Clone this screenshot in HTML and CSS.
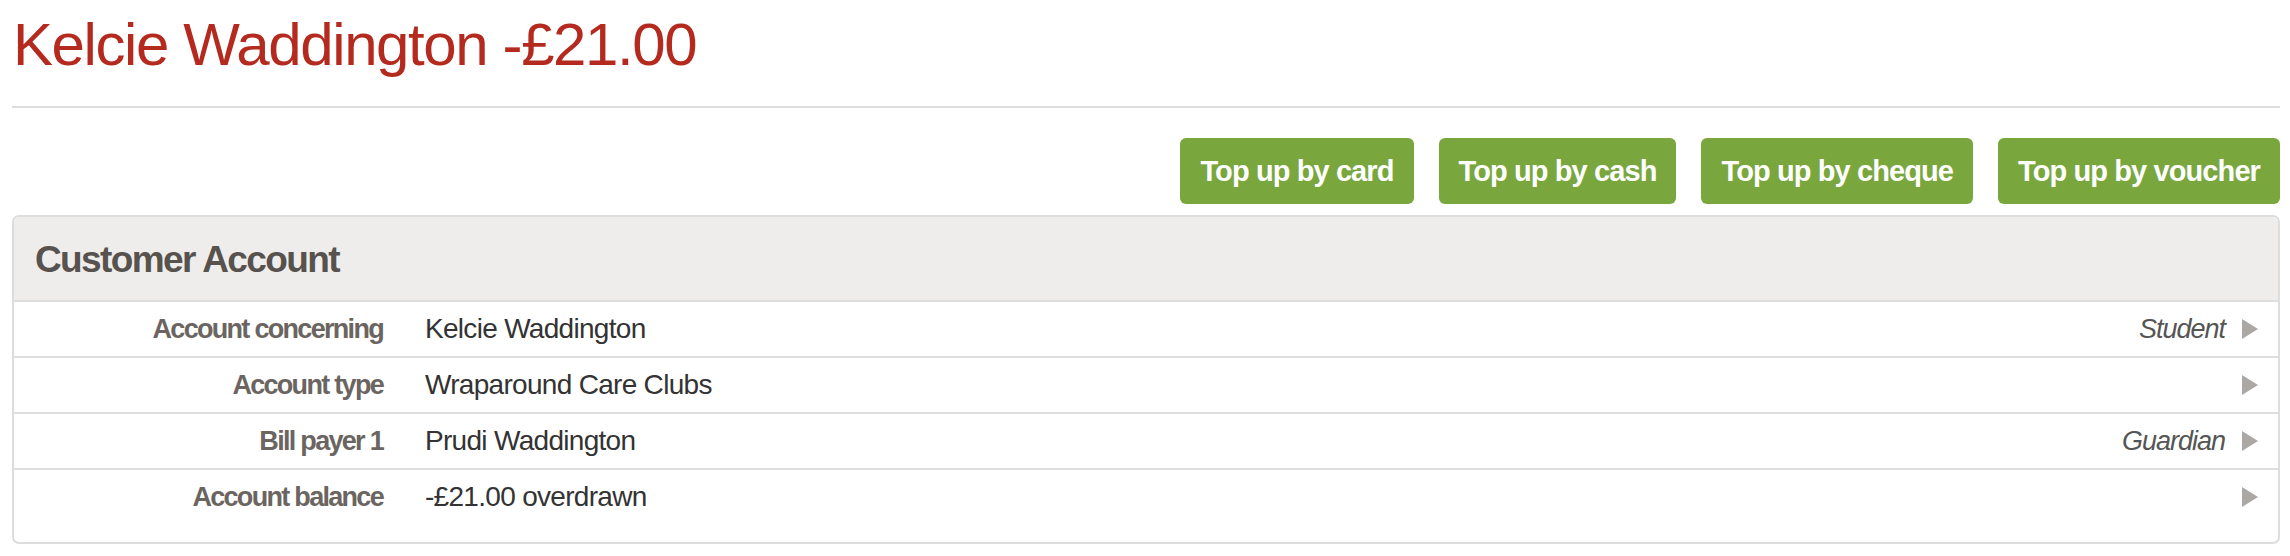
FILE: index.html
```html
<!DOCTYPE html>
<html lang="en">
<head>
<meta charset="utf-8">
<title>Kelcie Waddington</title>
<link rel="stylesheet" href="styles.css">
</head>
<body>
<div class="page">
  <h1 class="title">Kelcie Waddington -£21.00</h1>
  <hr class="rule">
  <div class="actions">
    <a class="btn" href="#">Top up by card</a>
    <a class="btn" href="#">Top up by cash</a>
    <a class="btn" href="#">Top up by cheque</a>
    <a class="btn" href="#">Top up by voucher</a>
  </div>
  <section class="card">
    <header class="card-head">
      <h2 class="card-title">Customer Account</h2>
    </header>
    <div class="card-body">
      <div class="row">
        <div class="label">Account concerning</div>
        <div class="value">Kelcie Waddington</div>
        <div class="note">Student</div>
        <span class="arrow"></span>
      </div>
      <div class="row">
        <div class="label">Account type</div>
        <div class="value">Wraparound Care Clubs</div>
        <div class="note"></div>
        <span class="arrow"></span>
      </div>
      <div class="row">
        <div class="label">Bill payer 1</div>
        <div class="value">Prudi Waddington</div>
        <div class="note">Guardian</div>
        <span class="arrow"></span>
      </div>
      <div class="row last">
        <div class="label">Account balance</div>
        <div class="value">-£21.00 overdrawn</div>
        <div class="note"></div>
        <span class="arrow"></span>
      </div>
    </div>
  </section>
</div>
</body>
</html>
```

FILE: styles.css
```css
html, body {
  margin: 0;
  padding: 0;
  background: #ffffff;
}

body {
  font-family: "Liberation Sans", Arial, sans-serif;
  color: #333333;
}

.page {
  padding: 10px 10px 0 12px;
}

.title {
  margin: 0 0 0 1px;
  font-weight: normal;
  font-size: 60px;
  line-height: 70px;
  letter-spacing: -1.4px;
  color: #b52a1f;
}

.rule {
  margin: 26px 0 0 0;
  border: 0;
  height: 2px;
  background: #dddddd;
}

.actions {
  display: flex;
  justify-content: flex-end;
  gap: 25px;
  margin-top: 30px;
}

.btn {
  display: block;
  padding: 15px 20px;
  line-height: 36px;
  font-weight: bold;
  font-size: 29px;
  letter-spacing: -0.9px;
  color: #ffffff;
  text-decoration: none;
  background: #79a73e;
  border-radius: 6px;
}

.card {
  margin-top: 11px;
  border: 2px solid #dddddd;
  border-radius: 7px;
  overflow: hidden;
}

.card-head {
  background: #eeedeb;
  border-bottom: 2px solid #dddddd;
  padding: 20px 20px 17px 21px;
}

.card-title {
  margin: 0;
  font-weight: bold;
  font-size: 37px;
  line-height: 46px;
  letter-spacing: -1.6px;
  color: #57524e;
}

.card-body {
  padding-bottom: 18px;
}

.row {
  display: flex;
  align-items: center;
  padding: 8px 20px 8px 0;
  border-bottom: 2px solid #dddddd;
  font-size: 28px;
  line-height: 38px;
}

.row.last {
  border-bottom: 0;
}

.label {
  width: 369px;
  flex: none;
  text-align: right;
  font-weight: bold;
  font-size: 27px;
  letter-spacing: -1.7px;
  color: #6b6561;
}

.value {
  flex: 1;
  margin-left: 42px;
  letter-spacing: -0.7px;
  color: #333333;
}

.note {
  font-style: italic;
  font-size: 27px;
  letter-spacing: -1px;
  color: #555555;
  margin-right: 17px;
}

.arrow {
  flex: none;
  width: 0;
  height: 0;
  border-left: 16px solid #aaa7a4;
  border-top: 10px solid transparent;
  border-bottom: 10px solid transparent;
}
```
